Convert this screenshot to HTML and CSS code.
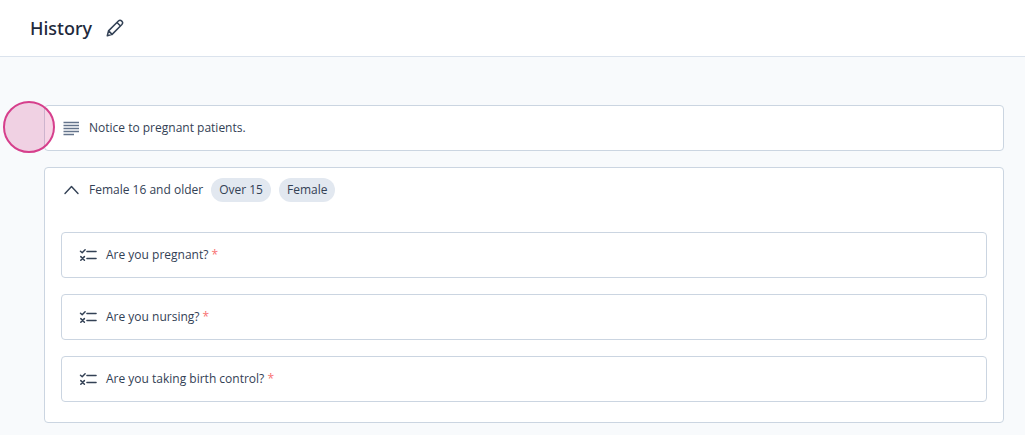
FILE: index.html
```html
<!DOCTYPE html>
<html lang="en">
<head>
<meta charset="utf-8">
<meta name="viewport" content="width=device-width, initial-scale=1">
<title>History</title>
<link rel="stylesheet" href="styles.css">
</head>
<body>
<svg class="sprite" aria-hidden="true">
  <symbol id="checklist" viewBox="0 0 18 18">
    <path d="M1 5.2 2.7 6.7 5.6 3.8M1.3 10.6 4.9 14.2M4.9 10.6 1.3 14.2" stroke-width="1.5"/>
    <path d="M7.4 5.5H16.6M7.4 12.5H16.6" stroke-width="1.4"/>
  </symbol>
</svg>
<header class="header">
  <h1 class="title">History</h1>
  <button class="icon-button" type="button" aria-label="Edit title">
    <svg class="pencil" viewBox="0 0 18 18" aria-hidden="true">
      <path d="M1.3 16.7 2.5 11.9 12.4 2C14.6-.1 18 3.2 15.9 5.5L6.1 15.4ZM2.6 11.9 6.1 15.4M11 3.5 14.5 7"/>
    </svg>
  </button>
</header>
<main class="content">
  <section class="card row">
    <span class="marker"></span>
    <svg class="icon lines" viewBox="0 0 18 18" aria-hidden="true">
      <path d="M1 3.5H16.5M1 6.5H16.5M1 9.5H16.5M1 12.5H16.5M1 15.5H11.5"/>
    </svg>
    <span>Notice to pregnant patients.</span>
  </section>
  <section class="card group">
    <div class="row group-head">
      <button class="icon-button" type="button" aria-label="Collapse section" aria-expanded="true">
        <svg class="icon chevron" viewBox="0 0 18 18" aria-hidden="true"><path d="M2.5 12.5 9 5.5 15.5 12.5"/></svg>
      </button>
      <span>Female 16 and older</span>
      <span class="tag">Over 15</span>
      <span class="tag">Female</span>
    </div>
    <div class="questions">
      <div class="card row">
        <svg class="icon" aria-hidden="true"><use href="#checklist"/></svg>
        <span>Are you pregnant? <span class="required">*</span></span>
      </div>
      <div class="card row">
        <svg class="icon" aria-hidden="true"><use href="#checklist"/></svg>
        <span>Are you nursing? <span class="required">*</span></span>
      </div>
      <div class="card row">
        <svg class="icon" aria-hidden="true"><use href="#checklist"/></svg>
        <span>Are you taking birth control? <span class="required">*</span></span>
      </div>
    </div>
  </section>
</main>
</body>
</html>
```
FILE: styles.css
```css
* { box-sizing: border-box; }

body {
  margin: 0;
  background: #f8fafc;
  color: #334155;
  font: 12px/24px "Open Sans", "Noto Sans", sans-serif;
}

.sprite { position: absolute; width: 0; height: 0; }

svg {
  display: block;
  flex: none;
  fill: none;
  stroke: #334155;
  stroke-linecap: round;
  stroke-linejoin: round;
}

.header {
  display: flex;
  align-items: center;
  gap: 14px;
  padding: 16px 30px;
  background: #fff;
  border-bottom: 1px solid #dbe3ed;
}

.title {
  margin: 0;
  color: #1e293b;
  font-family: "Noto Sans", "Open Sans", sans-serif;
  font-size: 18px;
  line-height: 24px;
  font-weight: 500;
}

.icon-button {
  padding: 0;
  border: 0;
  background: none;
  cursor: pointer;
}

.pencil { width: 18px; height: 18px; stroke-width: 1.5; }

.content {
  display: flex;
  flex-direction: column;
  gap: 16px;
  padding: 48px 21px 12px 44px;
}

.card {
  background: #fff;
  border: 1px solid #cbd5e1;
  border-radius: 4px;
}

.row {
  position: relative;
  display: flex;
  align-items: center;
  gap: 8px;
}

.card.row { padding: 10px 17px; }

.icon { width: 19px; height: 18px; }
.lines { stroke: #64748b; stroke-width: 1.6; stroke-linecap: butt; }
.chevron { stroke-width: 1.4; }

.group { padding: 10px 16px 20px; }
.group-head { padding-left: 1px; }

.tag {
  padding: 0 8px;
  border-radius: 12px;
  background: #e2e8f0;
}

.questions {
  display: flex;
  flex-direction: column;
  gap: 16px;
  margin-top: 30px;
}

.required { color: #f87171; }

.marker {
  position: absolute;
  top: -5px;
  left: -42px;
  width: 52px;
  height: 52px;
  border: 2px solid #d63f8c;
  border-radius: 50%;
  background: rgba(214, 63, 140, 0.22);
}
```
